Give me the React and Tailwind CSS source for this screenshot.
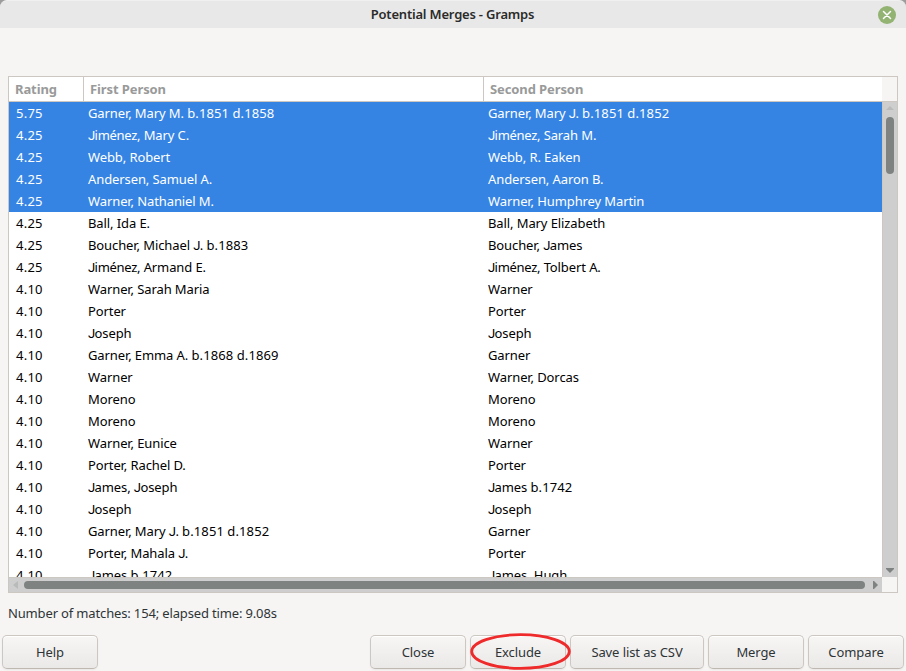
const rows = [
  ['5.75', 'Garner, Mary M. b.1851 d.1858', 'Garner, Mary J. b.1851 d.1852'],
  ['4.25', 'Jiménez, Mary C.', 'Jiménez, Sarah M.'],
  ['4.25', 'Webb, Robert', 'Webb, R. Eaken'],
  ['4.25', 'Andersen, Samuel A.', 'Andersen, Aaron B.'],
  ['4.25', 'Warner, Nathaniel M.', 'Warner, Humphrey Martin'],
  ['4.25', 'Ball, Ida E.', 'Ball, Mary Elizabeth'],
  ['4.25', 'Boucher, Michael J. b.1883', 'Boucher, James'],
  ['4.25', 'Jiménez, Armand E.', 'Jiménez, Tolbert A.'],
  ['4.10', 'Warner, Sarah Maria', 'Warner'],
  ['4.10', 'Porter', 'Porter'],
  ['4.10', 'Joseph', 'Joseph'],
  ['4.10', 'Garner, Emma A. b.1868 d.1869', 'Garner'],
  ['4.10', 'Warner', 'Warner, Dorcas'],
  ['4.10', 'Moreno', 'Moreno'],
  ['4.10', 'Moreno', 'Moreno'],
  ['4.10', 'Warner, Eunice', 'Warner'],
  ['4.10', 'Porter, Rachel D.', 'Porter'],
  ['4.10', 'James, Joseph', 'James b.1742'],
  ['4.10', 'Joseph', 'Joseph'],
  ['4.10', 'Garner, Mary J. b.1851 d.1852', 'Garner'],
  ['4.10', 'Porter, Mahala J.', 'Porter'],
  ['4.10', 'James b.1742', 'James, Hugh'],
];

const SELECTED_COUNT = 5;

// Letter J sits on the baseline; dates are set slightly wider than names.
function Name({ text }) {
  return (
    <span>
      {text.split(/(J|iménez|[bd]\.\d+)/).map((part, i) => {
        if (part === 'J') return <span key={i} className="font-['Roboto',sans-serif] tracking-[-0.6px]">J</span>;
        if (part === 'iménez') return <span key={i} className="tracking-[-0.3px]">{part}</span>;
        if (/^[bd]\.\d/.test(part)) return <span key={i} className="tracking-[0.12px]">{part}</span>;
        return part;
      })}
    </span>
  );
}

function Button({ children, className = 'w-24' }) {
  return (
    <button
      className={`h-[34px] shrink-0 rounded-[5px] border border-[#cdc7c2] border-b-[#bfb8b1] bg-linear-to-b from-[#f7f6f5] to-[#eae9e8] pt-[2px] text-center whitespace-nowrap text-[#2e3436] shadow-[inset_0_1px_#ffffff,0_1px_2px_rgba(0,0,0,0.06)] ${className}`}
    >
      {children}
    </button>
  );
}

function TitleBar() {
  return (
    <div className="bg-[#9c9c9c]">
      <header className="grid h-7 grid-cols-[1fr_auto_1fr] items-center rounded-t-[7px] border-t border-[#f0f0f0] bg-[#e8e8e8] pr-[10px]">
        <span />
        <h1 className="pl-[9px] text-[13px] font-semibold tracking-[-0.2px] text-[#2b2b2b]">Potential Merges - Gramps</h1>
        <svg className="justify-self-end" width="18" height="18" viewBox="0 0 18 18">
          <circle cx="9" cy="9" r="9" fill="#92b372" />
          <path d="M5.5 5.5l7 7M12.5 5.5l-7 7" stroke="#fff" strokeWidth="1.5" strokeLinecap="round" />
        </svg>
      </header>
    </div>
  );
}

function Table() {
  return (
    <section className="mx-2 mt-12 grid h-[517px] grid-cols-[873px_15px] grid-rows-[25px_475px_15px] border border-[#cdc7c2]">
      <div className="flex border-b border-[#cdc7c2] bg-white leading-6 font-bold text-[#999a9a]">
        <div className="w-[75px] border-r border-[#cdc7c2] pl-[6px]">Rating</div>
        <div className="w-[400px] border-r border-[#cdc7c2] pl-[6px]">First Person</div>
        <div className="pl-[6px]">Second Person</div>
      </div>
      <div className="border-b border-[#cdc7c2]" />
      <div className="overflow-hidden bg-white">
        {rows.map(([rating, first, second], i) => (
          <div
            key={i}
            className={`grid h-[22px] grid-cols-[72px_400px_1fr] pl-[7px] leading-[22px] whitespace-nowrap ${
              i < SELECTED_COUNT ? 'bg-[#3584e4] text-white' : 'text-black'
            }`}
          >
            <span className="tracking-[0.25px]">{rating}</span>
            <Name text={first} />
            <Name text={second} />
          </div>
        ))}
      </div>
      <div className="flex flex-col items-center border-l border-[#cdc7c2] bg-[#cecece] pt-1">
        <svg width="8" height="4" viewBox="0 0 8 4"><path d="M4 0l4 4H0z" fill="#b9baba" /></svg>
        <div className="mt-[7px] h-[57px] w-2 rounded-full bg-[#7e8280]" />
        <svg className="mt-auto mb-1" width="8" height="5" viewBox="0 0 8 5"><path d="M0 0h8v1L4 5 0 1z" fill="#7e8280" /></svg>
      </div>
      <div className="flex items-center border-t border-[#cdc7c2] bg-[#cecece] pr-1 pl-1">
        <svg width="5" height="8" viewBox="0 0 5 8"><path d="M5 0v8L0 4z" fill="#b9baba" /></svg>
        <div className="ml-[6px] h-2 w-[841px] rounded-full bg-[#7e8280]" />
        <svg className="ml-auto" width="5" height="8" viewBox="0 0 5 8"><path d="M0 0h1l4 4-4 4H0z" fill="#7e8280" /></svg>
      </div>
      <div />
    </section>
  );
}

export default function App() {
  return (
    <main className="flex h-[671px] w-[906px] flex-col overflow-hidden bg-[#f6f5f4] font-['Noto_Sans','Open_Sans',sans-serif] text-[13px] tracking-[-0.1px]">
      <TitleBar />
      <Table />
      <p className="mt-[10px] ml-2 leading-5 tracking-[-0.15px] text-[#2e3436]">Number of matches: 154; elapsed time: 9.08s</p>
      <footer className="mt-3 flex gap-1 px-[2px]">
        <Button>Help</Button>
        <span className="flex-1" />
        <Button>Close</Button>
        <div className="relative">
          <Button>Exclude</Button>
          <svg className="pointer-events-none absolute top-[-3px] left-0" width="101" height="38" viewBox="0 0 101 38">
            <ellipse cx="50.5" cy="19.5" rx="48.8" ry="16.8" fill="none" stroke="#ee2a2a" strokeWidth="2.8" />
          </svg>
        </div>
        <Button className="w-[134px]">Save list as CSV</Button>
        <Button>Merge</Button>
        <Button>Compare</Button>
      </footer>
    </main>
  );
}
